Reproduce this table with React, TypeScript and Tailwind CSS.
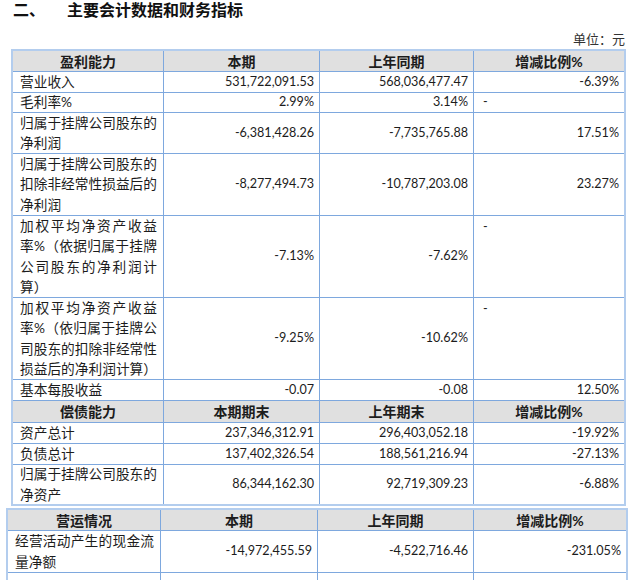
import React from "react";

const CJK = "font-['Lato','Noto_Sans_CJK_SC',sans-serif]";

type Cell = {
  lines?: string[];
  justify?: boolean[];
  num?: string;
  dash?: "top" | "mid";
  head?: string;
};

function Label({ lines, justify }: { lines: string[]; justify?: boolean[] }) {
  return (
    <div className="flex h-full flex-col justify-center pl-[7px] pr-[6px] text-[13.7px] leading-[20.5px] text-[#1c1c1c]">
      {lines.map((l, i) => (
        <div
          key={i}
          className={
            justify && justify[i]
              ? "whitespace-nowrap text-justify [text-align-last:justify]"
              : "whitespace-nowrap text-left"
          }
        >
          {l}
        </div>
      ))}
    </div>
  );
}

function CellView({ c }: { c: Cell }) {
  if (c.head !== undefined) {
    return (
      <div className="flex h-full items-center justify-center bg-[#e0e0e0] text-[14px] font-bold text-[#1c1c1c]">
        {c.head}
      </div>
    );
  }
  if (c.lines) return <Label lines={c.lines} justify={c.justify} />;
  if (c.num !== undefined) {
    return (
      <div className="flex h-full items-center justify-end pr-[5px] font-['Lato',sans-serif] text-[12.6px] text-[#1c1c1c]">
        {c.num}
      </div>
    );
  }
  if (c.dash === "top") {
    return (
      <div className="h-full pl-[9px] pt-[1px] font-['Lato',sans-serif] text-[12.6px] leading-[20px] text-[#1c1c1c]">
        -
      </div>
    );
  }
  if (c.dash === "mid") {
    return (
      <div className="flex h-full items-center pl-[9px] font-['Lato',sans-serif] text-[12.6px] text-[#1c1c1c]">
        -
      </div>
    );
  }
  return <div className="h-full" />;
}

function Row({ h, cells, last, cols }: { h: string; cells: Cell[]; last?: boolean; cols: string }) {
  return (
    <div className={`grid ${cols} ${h} ${last ? "" : "border-b border-[#7ea8de]"}`}>
      {cells.map((c, i) => (
        <div key={i} className={`overflow-hidden ${i < cells.length - 1 ? "border-r border-[#7ea8de]" : ""}`}>
          <CellView c={c} />
        </div>
      ))}
    </div>
  );
}

const C1 = "grid-cols-[151px_156px_154px_150px]";
const C2 = "grid-cols-[153px_157px_156px_152px]";

export default function App() {
  return (
    <div className={`relative h-[580px] w-[638px] overflow-hidden bg-white ${CJK}`}>
      {/* Title */}
      <div className="flex h-[20px] items-center pl-[13px] text-[16px] font-bold leading-[20px] text-[#111]">
        <span className="w-[54px]">二、</span>
        <span>主要会计数据和财务指标</span>
      </div>
      {/* Unit */}
      <div className="mt-[11px] flex h-[17px] justify-end pr-[13px] text-[13px] leading-[17px] text-[#333]">
        单位：元
      </div>

      {/* Table 1 */}
      <div className="ml-[11px] mt-[1px] w-[615px] border-2 border-[#b3cdee]">
        <Row
          cols={C1}
          h="h-[21px]"
          cells={[{ head: "盈利能力" }, { head: "本期" }, { head: "上年同期" }, { head: "增减比例%" }]}
        />
        <Row
          cols={C1}
          h="h-[21px]"
          cells={[{ lines: ["营业收入"] }, { num: "531,722,091.53" }, { num: "568,036,477.47" }, { num: "-6.39%" }]}
        />
        <Row
          cols={C1}
          h="h-[20px]"
          cells={[{ lines: ["毛利率%"] }, { num: "2.99%" }, { num: "3.14%" }, { dash: "mid" }]}
        />
        <Row
          cols={C1}
          h="h-[41px]"
          cells={[
            { lines: ["归属于挂牌公司股东的", "净利润"], justify: [true, false] },
            { num: "-6,381,428.26" },
            { num: "-7,735,765.88" },
            { num: "17.51%" },
          ]}
        />
        <Row
          cols={C1}
          h="h-[62px]"
          cells={[
            { lines: ["归属于挂牌公司股东的", "扣除非经常性损益后的", "净利润"], justify: [true, true, false] },
            { num: "-8,277,494.73" },
            { num: "-10,787,203.08" },
            { num: "23.27%" },
          ]}
        />
        <Row
          cols={C1}
          h="h-[82px]"
          cells={[
            {
              lines: ["加权平均净资产收益", "率%（依据归属于挂牌", "公司股东的净利润计", "算）"],
              justify: [true, true, true, false],
            },
            { num: "-7.13%" },
            { num: "-7.62%" },
            { dash: "top" },
          ]}
        />
        <Row
          cols={C1}
          h="h-[82px]"
          cells={[
            {
              lines: ["加权平均净资产收益", "率%（依归属于挂牌公", "司股东的扣除非经常性", "损益后的净利润计算）"],
              justify: [true, true, true, true],
            },
            { num: "-9.25%" },
            { num: "-10.62%" },
            { dash: "top" },
          ]}
        />
        <Row
          cols={C1}
          h="h-[21px]"
          cells={[{ lines: ["基本每股收益"] }, { num: "-0.07" }, { num: "-0.08" }, { num: "12.50%" }]}
        />
        <Row
          cols={C1}
          h="h-[22px]"
          cells={[{ head: "偿债能力" }, { head: "本期期末" }, { head: "上年期末" }, { head: "增减比例%" }]}
        />
        <Row
          cols={C1}
          h="h-[21px]"
          cells={[{ lines: ["资产总计"] }, { num: "237,346,312.91" }, { num: "296,403,052.18" }, { num: "-19.92%" }]}
        />
        <Row
          cols={C1}
          h="h-[21px]"
          cells={[{ lines: ["负债总计"] }, { num: "137,402,326.54" }, { num: "188,561,216.94" }, { num: "-27.13%" }]}
        />
        <Row
          cols={C1}
          h="h-[39px]"
          last
          cells={[
            { lines: ["归属于挂牌公司股东的", "净资产"], justify: [true, false] },
            { num: "86,344,162.30" },
            { num: "92,719,309.23" },
            { num: "-6.88%" },
          ]}
        />
      </div>

      {/* Table 2 */}
      <div className="ml-[6px] mt-[2px] w-[622px] border-2 border-[#b3cdee]">
        <Row
          cols={C2}
          h="h-[21px]"
          cells={[{ head: "营运情况" }, { head: "本期" }, { head: "上年同期" }, { head: "增减比例%" }]}
        />
        <Row
          cols={C2}
          h="h-[42px]"
          cells={[
            { lines: ["经营活动产生的现金流", "量净额"], justify: [true, false] },
            { num: "-14,972,455.59" },
            { num: "-4,522,716.46" },
            { num: "-231.05%" },
          ]}
        />
        <Row cols={C2} h="h-[42px]" last cells={[{}, {}, {}, {}]} />
      </div>
    </div>
  );
}
